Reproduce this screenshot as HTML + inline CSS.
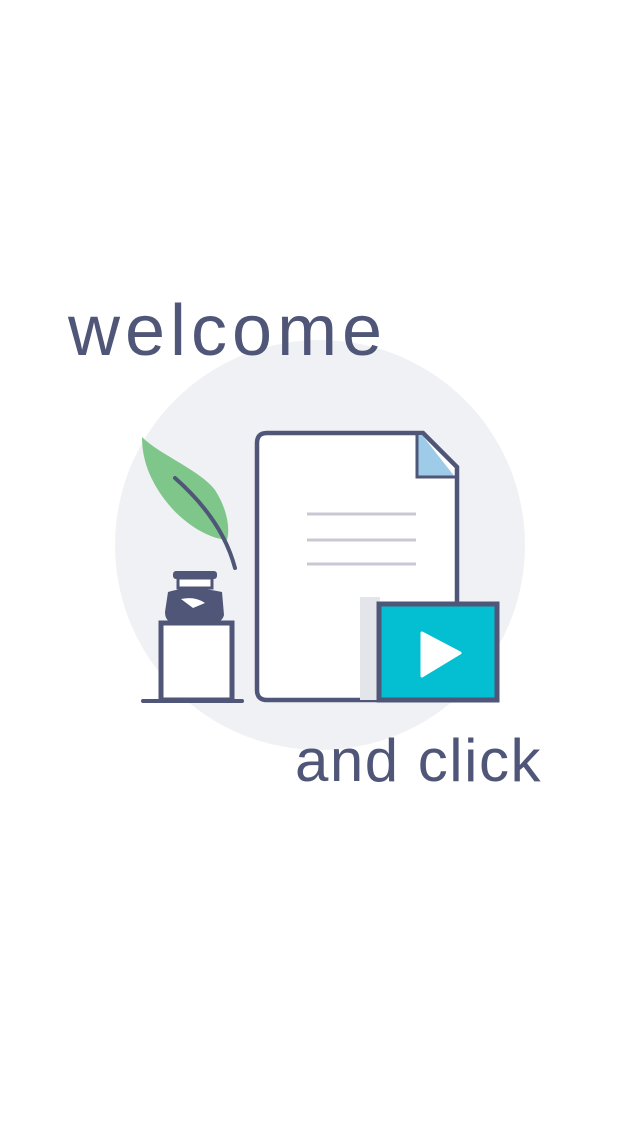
<!DOCTYPE html>
<html><head><style>
body{margin:0;width:640px;height:1136px;background:#fff;overflow:hidden;position:relative;font-family:"Liberation Sans",sans-serif}
.t{position:absolute;color:#4f5677;line-height:1;white-space:nowrap}
</style></head><body>
<svg width="640" height="1136" style="position:absolute;left:0;top:0">
<circle cx="320" cy="545" r="205" fill="#f0f1f5"/>
<path d="M142,437 C160,455 200,470 215,490 C228,510 230,530 227,540 C205,538 180,520 165,500 C150,480 142,460 142,437Z" fill="#7fc68a"/>
<path d="M175,478 C200,500 225,530 235,568" stroke="#4f5677" stroke-width="4" fill="none" stroke-linecap="round"/>
<rect x="161" y="623" width="71" height="77" fill="#fff" stroke="#4f5677" stroke-width="5"/>
<line x1="143" y1="701" x2="242" y2="701" stroke="#4f5677" stroke-width="4" stroke-linecap="round"/>
<rect x="173" y="571" width="44" height="8" rx="3" fill="#4f5677"/>
<rect x="178" y="578" width="34" height="10" fill="#fff" stroke="#4f5677" stroke-width="3"/>
<path d="M168,592 Q190,585 222,592 L224,615 Q222,623 212,623 L176,623 Q165,623 165,612Z" fill="#4f5677"/>
<path d="M181,599 Q195,596 205,603 L193,608Z" fill="#fff"/>
<path d="M267,433 L423,433 L457,467 L457,690 Q457,700 447,700 L267,700 Q257,700 257,690 L257,443 Q257,433 267,433Z" fill="#fff" stroke="#4f5677" stroke-width="4.5"/>
<path d="M417,435 L417,477 L455,477 L422,435Z" fill="#9ecbe8"/>
<path d="M417,435 L417,477 L455,477" fill="none" stroke="#4f5677" stroke-width="3"/>
<g stroke="#c8c8d4" stroke-width="3"><line x1="307" y1="514" x2="416" y2="514"/><line x1="307" y1="540" x2="416" y2="540"/><line x1="307" y1="564" x2="416" y2="564"/></g>
<rect x="360" y="597" width="20" height="103" fill="#e4e5ea"/>
<rect x="379" y="604" width="118" height="96" fill="#04bfd1" stroke="#4f5677" stroke-width="5"/>
<path d="M422,633 L460,653 L422,676Z" fill="#fff" stroke="#fff" stroke-width="3" stroke-linejoin="round"/>
</svg>
<div class="t" style="left:68px;top:295px;font-size:72px;letter-spacing:5px">welcome</div>
<div class="t" style="left:295px;top:731px;font-size:60px;letter-spacing:1.5px">and click</div>
</body></html>
